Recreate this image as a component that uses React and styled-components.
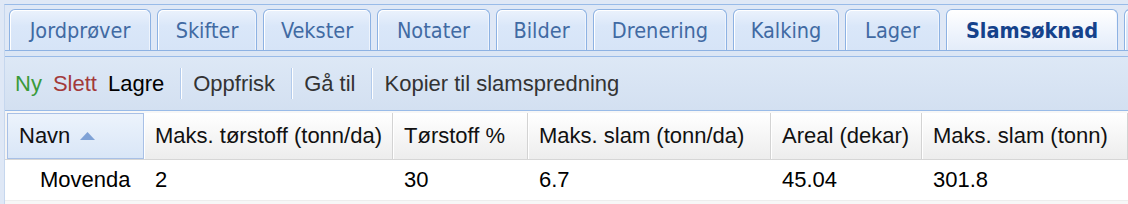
import React from 'react';
import styled, { createGlobalStyle } from 'styled-components';

const GlobalStyle = createGlobalStyle`
  html, body {
    margin: 0;
    padding: 0;
    background: #ffffff;
  }
  body {
    font-family: "Liberation Sans", Arial, sans-serif;
  }
`;

const Frame = styled.div`
  width: 1128px;
  height: 204px;
  overflow: hidden;
  box-sizing: border-box;
  padding: 4px 0 0 4px;
  background: #dfe8f6;
`;

const Panel = styled.div`
  height: 100%;
  display: flex;
  flex-direction: column;
  border-top: 1px solid #99bbe8;
  border-left: 1px solid #c6d7ee;
  background: #ffffff;
`;

const TabStrip = styled.div`
  display: flex;
  align-items: flex-end;
  gap: 6px;
  height: 46px;
  box-sizing: border-box;
  padding: 4px 0 0 4px;
  background: #dfe8f6;
  border-bottom: 1px solid #8db2e3;
  overflow: hidden;
`;

const Tab = styled.div`
  flex: none;
  position: relative;
  width: ${p => p.$w}px;
  height: ${p => (p.$active ? 42 : 41)}px;
  margin-bottom: ${p => (p.$active ? -1 : 0)}px;
  z-index: ${p => (p.$active ? 1 : 0)};
  box-sizing: border-box;
  border: 1px solid #8db2e3;
  border-bottom: none;
  border-radius: 6px 6px 0 0;
  background: ${p =>
    p.$active
      ? 'linear-gradient(#ffffff, #edf3fc 60%, #e3ecf9)'
      : 'linear-gradient(#ebf2fc, #dae7f9 40%, #d6e4f7)'};
  box-shadow: inset 1px 1px 0 #ffffff, inset -1px 0 0 #eef4fd;
  display: flex;
  align-items: center;
  justify-content: center;
  font-family: "DejaVu Sans Condensed", "DejaVu Sans", Tahoma, sans-serif;
  font-size: 21.5px;
  font-weight: ${p => (p.$active ? 700 : 400)};
  color: ${p => (p.$active ? '#15428b' : '#416aa3')};
  white-space: nowrap;
`;

const StripGap = styled.div`
  height: 6px;
  box-sizing: border-box;
  background: #dbe6f5;
  border-bottom: 1px solid #99bbe8;
`;

const Toolbar = styled.div`
  display: flex;
  align-items: center;
  height: 54px;
  box-sizing: border-box;
  padding-left: 5px;
  background: linear-gradient(#dde8f6, #d3e0f1);
  border-bottom: 1px solid #99bbe8;
`;

const ToolButton = styled.span`
  padding: 0 5px;
  margin-right: 1px;
  font-size: 22px;
  color: ${p => p.$color || '#333333'};
  white-space: nowrap;
`;

const ToolSeparator = styled.span`
  width: 1px;
  height: 31px;
  margin: 0 6px 0 10px;
  background: #b3cbec;
  border-right: 1px solid #ffffff;
`;

const Grid = styled.div`
  padding-top: 2px;
  background: #f7f7f7;
  flex: 1;
`;

const Row = styled.div`
  display: grid;
  grid-template-columns: 139px 249px 135px 243px 151px 1fr;
  height: ${p => p.$h}px;
  box-sizing: border-box;
  background: ${p => p.$bg};
  border-bottom: 1px solid ${p => p.$line};
`;

const HeaderCell = styled.div`
  display: flex;
  align-items: center;
  box-sizing: border-box;
  padding-left: 11px;
  margin-left: ${p => (p.$sorted ? 2 : 0)}px;
  font-size: 22px;
  color: #111111;
  white-space: nowrap;
  overflow: hidden;
  background: ${p =>
    p.$sorted ? 'linear-gradient(#ecf3fc, #d9e6f7)' : 'linear-gradient(#ffffff, #f6f6f6 50%, #ededed)'};
  border: ${p => (p.$sorted ? '1px solid #a8c0e6' : 'none')};
  border-right: 1px solid ${p => (p.$sorted ? '#a8c0e6' : '#d3d3d3')};
  box-shadow: ${p => (p.$sorted ? 'none' : 'inset 1px 0 0 #ffffff')};
`;

const SortArrow = styled.svg`
  margin-left: 10px;
  flex: none;
`;

const Cell = styled.div`
  display: flex;
  align-items: center;
  padding-left: ${p => p.$pad}px;
  font-size: 22px;
  color: #000000;
  white-space: nowrap;
  overflow: hidden;
`;

const tabs = [
  { label: 'Jordprøver', w: 142 },
  { label: 'Skifter', w: 100 },
  { label: 'Vekster', w: 108 },
  { label: 'Notater', w: 113 },
  { label: 'Bilder', w: 91 },
  { label: 'Drenering', w: 134 },
  { label: 'Kalking', w: 106 },
  { label: 'Lager', w: 95 },
  { label: 'Slamsøknad', w: 172, active: true },
  { label: '', w: 100 },
];

const columns = [
  'Navn',
  'Maks. tørstoff (tonn/da)',
  'Tørstoff %',
  'Maks. slam (tonn/da)',
  'Areal (dekar)',
  'Maks. slam (tonn)',
];

const rows = [['Movenda', '2', '30', '6.7', '45.04', '301.8']];

const App = () => {
  return (
    <>
      <GlobalStyle />
      <Frame>
        <Panel>
          <TabStrip>
            {tabs.map((tab, i) => (
              <Tab key={i} $w={tab.w} $active={tab.active}>
                {tab.label}
              </Tab>
            ))}
          </TabStrip>
          <StripGap />
          <Toolbar>
            <ToolButton $color="#3a9a3a">Ny</ToolButton>
            <ToolButton $color="#a33a3a">Slett</ToolButton>
            <ToolButton $color="#000000">Lagre</ToolButton>
            <ToolSeparator />
            <ToolButton>Oppfrisk</ToolButton>
            <ToolSeparator />
            <ToolButton>Gå til</ToolButton>
            <ToolSeparator />
            <ToolButton>Kopier til slamspredning</ToolButton>
          </Toolbar>
          <Grid>
            <Row $h={47} $bg="#f4f4f4" $line="#d6d6d6">
              {columns.map((col, i) => (
                <HeaderCell key={col} $sorted={i === 0}>
                  {col}
                  {i === 0 && (
                    <SortArrow width="15" height="8" viewBox="0 0 15 8">
                      <polygon points="7.5,0 15,8 0,8" fill="#7fa2d6" />
                    </SortArrow>
                  )}
                </HeaderCell>
              ))}
            </Row>
            {rows.map((row, r) => (
              <Row key={r} $h={41} $bg="#ffffff" $line="#ededed">
                {row.map((val, i) => (
                  <Cell key={i} $pad={i === 0 ? 35 : 11}>
                    {val}
                  </Cell>
                ))}
              </Row>
            ))}
          </Grid>
        </Panel>
      </Frame>
    </>
  );
};

export default App;
